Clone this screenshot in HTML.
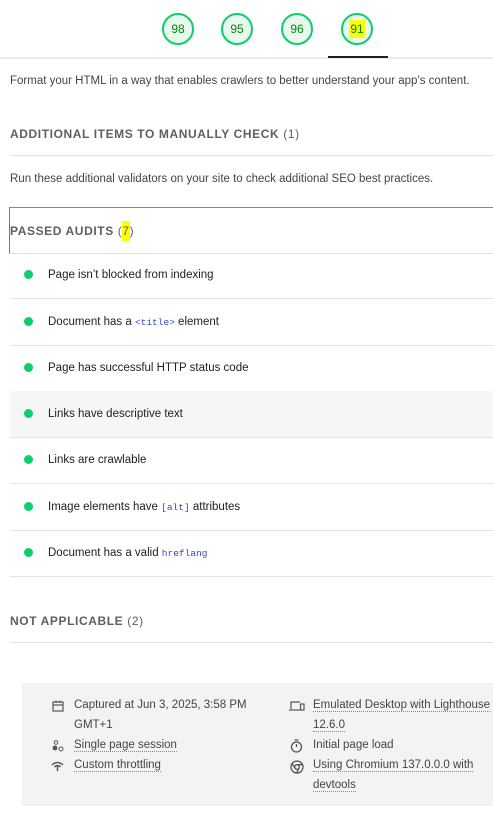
<!DOCTYPE html>
<html><head><style>
body{margin:0;width:493px;height:815px;overflow:hidden;background:#fff;font-family:"Liberation Sans",sans-serif;color:#212121;position:relative}
.abs{position:absolute}
.g{position:absolute;top:13px;width:28px;height:28px;border:2px solid #0cce6b;border-radius:50%;background:#e8f8ef;color:#080;font-size:12px;text-align:center;line-height:28px}
.hl{background:#ffff00;}
.hdr{position:absolute;left:10px;font-size:12px;letter-spacing:0.6px;color:#5f5f5f;font-weight:bold}
.hdr span{font-weight:normal}
.line{position:absolute;left:10px;right:0;height:1px;background:#e0e0e0}
.txt{position:absolute;left:10px;font-size:11.5px;color:#444;white-space:nowrap}
.item{position:absolute;left:10px;right:0;height:46px;border-bottom:1px solid #e4e4e4;font-size:11.5px;color:#212121}
.item .d{position:absolute;left:14px;top:18px;width:9px;height:9px;border-radius:50%;background:#0cce6b}
.item .t{position:absolute;left:38px;top:17px;white-space:nowrap}
code{font-family:"Liberation Mono",monospace;font-size:9.5px;color:#3346c8}
.foot{position:absolute;left:22px;top:683px;width:471px;height:123px;background:#f3f3f3;font-size:11.5px;color:#444}
.foot div{position:absolute;white-space:nowrap;line-height:20px}
.u{border-bottom:1px dotted #888}
</style></head><body>
<div class="g" style="left:162px">98</div>
<div class="g" style="left:221px">95</div>
<div class="g" style="left:281px">96</div>
<div class="g" style="left:341px"><span class="hl" style="padding:2px 1px">91</span></div>
<div class="abs" style="left:0;right:0;top:57px;height:2px;background:#ebebeb"></div>
<div class="abs" style="left:328px;width:60px;top:56px;height:2px;background:#202124"></div>
<div class="txt" style="top:75px">Format your HTML in a way that enables crawlers to better understand your app’s content.</div>
<div class="hdr" style="top:127px">ADDITIONAL ITEMS TO MANUALLY CHECK <span>(1)</span></div>
<div class="line" style="top:155px"></div>
<div class="txt" style="top:173px">Run these additional validators on your site to check additional SEO best practices.</div>
<div class="abs" style="left:9px;right:0;top:207px;height:45px;border-left:1px solid #4a7fd4;border-top:1px solid #888;border-bottom:1px solid #e0e0e0"></div>
<div class="hdr" style="top:224px">PASSED AUDITS <span>(<span class="hl" style="padding:3px 0">7</span>)</span></div>
<div class="item" style="top:252px"><i class="d"></i><span class="t">Page isn’t blocked from indexing</span></div>
<div class="item" style="top:299px"><i class="d"></i><span class="t">Document has a <code>&lt;title&gt;</code> element</span></div>
<div class="item" style="top:345px"><i class="d"></i><span class="t">Page has successful HTTP status code</span></div>
<div class="item" style="top:391px;background:#f6f6f6"><i class="d"></i><span class="t">Links have descriptive text</span></div>
<div class="item" style="top:437px"><i class="d"></i><span class="t">Links are crawlable</span></div>
<div class="item" style="top:484px"><i class="d"></i><span class="t">Image elements have <code>[alt]</code> attributes</span></div>
<div class="item" style="top:530px"><i class="d"></i><span class="t">Document has a valid <code>hreflang</code></span></div>
<div class="hdr" style="top:614px">NOT APPLICABLE <span>(2)</span></div>
<div class="line" style="top:642px"></div>
<div class="foot">
<svg class="abs" style="left:30px;top:17px" width="12" height="12" viewBox="0 0 12 12" fill="none" stroke="#555" stroke-width="1.2"><rect x="1" y="2" width="10" height="9"/><line x1="1" y1="5" x2="11" y2="5"/><line x1="4" y1="0.5" x2="4" y2="3"/><line x1="8" y1="0.5" x2="8" y2="3"/></svg>
<div style="left:52px;top:12px">Captured at Jun 3, 2025, 3:58 PM<br>GMT+1</div>
<svg class="abs" style="left:30px;top:57px" width="12" height="12" viewBox="0 0 12 12"><circle cx="4" cy="2.5" r="1.8" fill="none" stroke="#555"/><circle cx="3" cy="8" r="2.4" fill="#555"/><circle cx="9" cy="9" r="2" fill="none" stroke="#555"/></svg>
<div style="left:52px;top:52px"><span class="u">Single page session</span></div>
<svg class="abs" style="left:29px;top:77px" width="13" height="12" viewBox="0 0 13 12" fill="none" stroke="#555" stroke-width="1.5"><path d="M1 5 Q6.5 0 12 5"/><path d="M3.5 7 Q6.5 4 9.5 7"/><path d="M6.5 5 L6.5 11"/></svg>
<div style="left:52px;top:72px"><span class="u">Custom throttling</span></div>
<svg class="abs" style="left:267px;top:17px" width="16" height="12" viewBox="0 0 16 12" fill="none" stroke="#555" stroke-width="1.2"><path d="M2 9V2h9"/><path d="M0 10h11"/><rect x="11.5" y="4" width="3.5" height="6"/></svg>
<div style="left:291px;top:12px"><span class="u">Emulated Desktop with Lighthouse</span><br><span class="u">12.6.0</span></div>
<svg class="abs" style="left:268px;top:56px" width="13" height="14" viewBox="0 0 13 14" fill="none" stroke="#555" stroke-width="1.3"><circle cx="6.5" cy="8" r="5"/><path d="M4.5 1h4M6.5 8V5"/></svg>
<div style="left:291px;top:52px">Initial page load</div>
<svg class="abs" style="left:268px;top:77px" width="14" height="14" viewBox="0 0 14 14" fill="none" stroke="#555" stroke-width="1.3"><circle cx="7" cy="7" r="6"/><circle cx="7" cy="7" r="2.3"/><path d="M7 4.7h5.5M5 8.2L2 3.5M9 8.2L6.5 13"/></svg>
<div style="left:291px;top:72px"><span class="u">Using Chromium 137.0.0.0 with</span><br><span class="u">devtools</span></div>
</div>
</body></html>
